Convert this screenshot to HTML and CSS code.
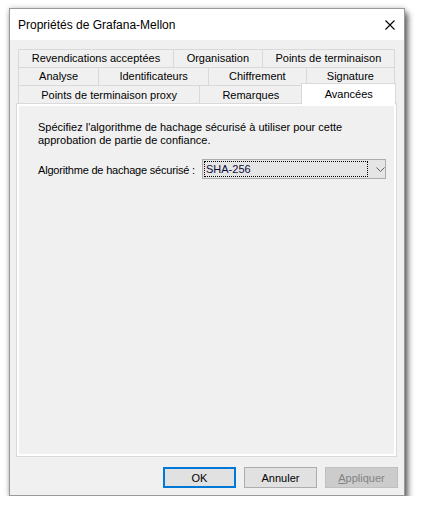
FILE: index.html
```html
<!DOCTYPE html>
<html lang="fr">
<head>
<meta charset="utf-8"/>
<title>Propriétés de Grafana-Mellon</title>
<link rel="stylesheet" href="styles.css">
</head>
<body>
<div class="window">
  <div class="titlebar">
    <span class="title">Propriétés de Grafana-Mellon</span>
    <svg class="close" width="10" height="10" viewBox="0 0 10 10">
      <path d="M0.5 0.5 L9.5 9.5 M9.5 0.5 L0.5 9.5" stroke="#000" stroke-width="1.1" fill="none"/>
    </svg>
  </div>
  <div class="client">
    <div class="tabs">
      <div class="tab-row">
        <div class="tab">Revendications acceptées</div>
        <div class="tab">Organisation</div>
        <div class="tab">Points de terminaison</div>
      </div>
      <div class="tab-row">
        <div class="tab">Analyse</div>
        <div class="tab">Identificateurs</div>
        <div class="tab">Chiffrement</div>
        <div class="tab">Signature</div>
      </div>
      <div class="tab-row last">
        <div class="tab">Points de terminaison proxy</div>
        <div class="tab">Remarques</div>
        <div class="tab selected">Avancées</div>
      </div>
    </div>
    <div class="panel">
      <p class="intro">Spécifiez l'algorithme de hachage sécurisé à utiliser pour cette<br>approbation de partie de confiance.</p>
      <div class="field">
        <label class="field-label">Algorithme de hachage sécurisé :</label>
        <div class="combo">
          <span class="combo-value">SHA-256</span>
          <svg class="chevron" width="9" height="5" viewBox="0 0 9 5">
            <path d="M0.5 0.5 L4.5 4.5 L8.5 0.5" stroke="#606060" stroke-width="1" fill="none"/>
          </svg>
        </div>
      </div>
    </div>
    <div class="buttons">
      <button class="btn default">OK</button>
      <button class="btn">Annuler</button>
      <button class="btn disabled"><u>A</u>ppliquer</button>
    </div>
  </div>
</div>
</body>
</html>
```

FILE: styles.css
```css
body { margin: 0; background: #fff; font-family: "Liberation Sans", Arial, sans-serif; font-size: 11px; color: #000; }
.window {
  margin: 8px 0 0 9px;
  width: 396px;
  height: 488px;
  box-sizing: border-box;
  border: 1px solid #9a9a9a;
  background: #f0f0f0;
  display: flex;
  flex-direction: column;
  box-shadow: 0 0 5px rgba(0, 0, 0, 0.22), 3px 5px 6px rgba(0, 0, 0, 0.6);
}
.titlebar {
  height: 31px;
  background: #fff;
  display: flex;
  align-items: center;
  justify-content: space-between;
  padding: 0 9px 0 8px;
}
.title { font-size: 12px; }
.close { display: block; }
.client { flex: 1; display: flex; flex-direction: column; padding: 9px 7px 7px 6px; }
.tabs { display: flex; flex-direction: column; margin: 0 2px; }
.tab-row { display: flex; align-items: flex-end; margin-top: -1px; }
.tab-row:first-child { margin-top: 0; }
.tab {
  flex: 1 1 auto;
  height: 19px;
  box-sizing: border-box;
  border: 1px solid #d9d9d9;
  margin-left: -1px;
  padding: 0 6px;
  line-height: 17px;
  text-align: center;
  white-space: nowrap;
}
.tab:first-child { margin-left: 0; }
.tab-row.last .tab { padding-top: 1px; }
.tab.selected {
  position: relative;
  z-index: 1;
  height: 22px;
  margin-top: -2px;
  margin-bottom: -1px;
  margin-right: -1px;
  background: #fff;
  border-bottom-color: #fff;
  padding-top: 0;
  line-height: 18px;
}
.panel {
  flex: 1;
  margin-top: -1px;
  border: 1px solid #d9d9d9;
  box-shadow: inset 0 0 0 2px #fff;
  padding: 17px 20px 0 21px;
}
.intro { margin: 0; line-height: 13px; }
.field { display: flex; align-items: center; margin-top: 12px; }
.field-label { width: 164px; flex: none; padding-top: 2px; letter-spacing: -0.2px; }
.combo {
  width: 184px;
  height: 20px;
  box-sizing: border-box;
  border: 1px solid #acacac;
  background: #e5e5e5;
  display: flex;
  align-items: center;
  padding: 1px 0 1px 1px;
}
.combo-value {
  width: 164px;
  height: 16px;
  box-sizing: border-box;
  outline: 1px dotted #000;
  outline-offset: -1px;
  padding: 1px 0 0 2px;
  line-height: 14px;
  color: #0b0b3a;
}
.chevron { margin-left: 8px; }
.buttons { display: flex; justify-content: flex-end; gap: 8px; margin-top: 10px; margin-right: -1px; }
.btn {
  width: 73px;
  height: 21px;
  box-sizing: border-box;
  border: 1px solid #adadad;
  background: #e1e1e1;
  font-family: inherit;
  font-size: 11px;
  color: #000;
  padding: 0;
}
.btn.default { border: 2px solid #0078d7; }
.btn.disabled { background: #cccccc; border-color: #bfbfbf; color: #838383; }
```
